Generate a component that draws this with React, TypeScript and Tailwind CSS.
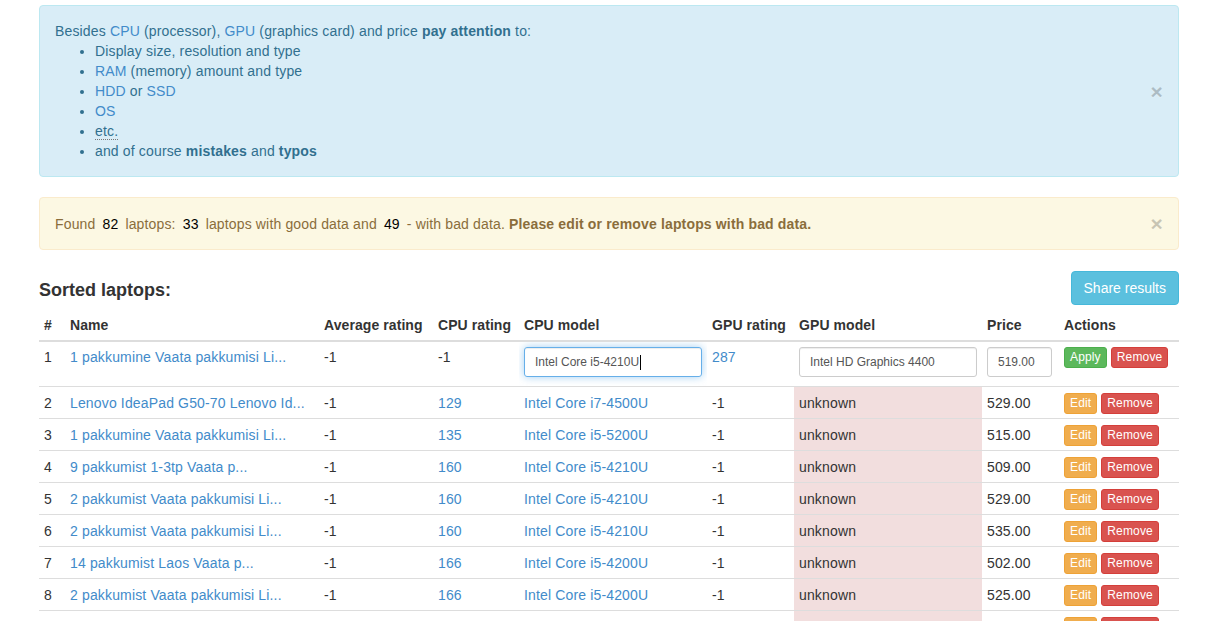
import React from 'react';

type Laptop = {
  id: number;
  name: string;
  avg: string;
  cpuRating: string;
  cpuModel: string;
  gpuRating: string;
  price: string;
};

const laptops: Laptop[] = [
  { id: 2, name: 'Lenovo IdeaPad G50-70 Lenovo Id...', avg: '-1', cpuRating: '129', cpuModel: 'Intel Core i7-4500U', gpuRating: '-1', price: '529.00' },
  { id: 3, name: '1 pakkumine Vaata pakkumisi Li...', avg: '-1', cpuRating: '135', cpuModel: 'Intel Core i5-5200U', gpuRating: '-1', price: '515.00' },
  { id: 4, name: '9 pakkumist 1-3tp Vaata p...', avg: '-1', cpuRating: '160', cpuModel: 'Intel Core i5-4210U', gpuRating: '-1', price: '509.00' },
  { id: 5, name: '2 pakkumist Vaata pakkumisi Li...', avg: '-1', cpuRating: '160', cpuModel: 'Intel Core i5-4210U', gpuRating: '-1', price: '529.00' },
  { id: 6, name: '2 pakkumist Vaata pakkumisi Li...', avg: '-1', cpuRating: '160', cpuModel: 'Intel Core i5-4210U', gpuRating: '-1', price: '535.00' },
  { id: 7, name: '14 pakkumist Laos Vaata p...', avg: '-1', cpuRating: '166', cpuModel: 'Intel Core i5-4200U', gpuRating: '-1', price: '502.00' },
  { id: 8, name: '2 pakkumist Vaata pakkumisi Li...', avg: '-1', cpuRating: '166', cpuModel: 'Intel Core i5-4200U', gpuRating: '-1', price: '525.00' },
  { id: 9, name: '3 pakkumist Vaata pakkumisi Li...', avg: '-1', cpuRating: '166', cpuModel: 'Intel Core i5-4200U', gpuRating: '-1', price: '539.00' },
];

const CloseX: React.FC = () => (
  <button className="text-[21px] font-bold leading-none text-black opacity-20 [text-shadow:0_1px_0_#fff]">×</button>
);

const Btn: React.FC<{ kind: 'apply' | 'edit' | 'remove'; children: React.ReactNode }> = ({ kind, children }) => {
  const colors =
    kind === 'apply'
      ? 'bg-[#5cb85c] border-[#4cae4c]'
      : kind === 'edit'
      ? 'bg-[#f0ad4e] border-[#eea236]'
      : 'bg-[#d9534f] border-[#d43f3a]';
  return (
    <button className={`h-[21px] px-[5px] rounded-[3px] border text-[12px] leading-[17px] text-white ${colors}`}>
      {children}
    </button>
  );
};

const link = 'text-[#428bca]';
const td = 'px-[5px] pt-[6px] pb-[4px] align-top border-t border-[#ddd] whitespace-nowrap overflow-hidden';
const td1 = 'px-[5px] pt-[5px] pb-[9px] align-top border-t border-[#ddd] whitespace-nowrap overflow-hidden';

export default function App() {
  return (
    <div className="h-[621px] overflow-hidden bg-white font-['Liberation_Sans',Arial,sans-serif] text-[14px] leading-[20px] tracking-[0.15px] text-[#333]">
      <div className="w-[1140px] ml-[39px] pt-[5px]">
        {/* info alert */}
        <div className="flex items-center rounded-[4px] border border-[#bce8f1] bg-[#d9edf7] text-[#31708f] p-[15px] mb-[20px]">
          <div className="flex-1">
            <div>
              Besides <a className={link}>CPU</a> (processor), <a className={link}>GPU</a> (graphics card) and price{' '}
              <b>pay attention</b> to:
            </div>
            <ul className="list-disc pl-[40px] m-0">
              <li>Display size, resolution and type</li>
              <li>
                <a className={link}>RAM</a> (memory) amount and type
              </li>
              <li>
                <a className={link}>HDD</a> or <a className={link}>SSD</a>
              </li>
              <li>
                <a className={link}>OS</a>
              </li>
              <li>
                <abbr className="no-underline border-b border-dotted border-[#777]">etc.</abbr>
              </li>
              <li>
                and of course <b>mistakes</b> and <b>typos</b>
              </li>
            </ul>
          </div>
          <CloseX />
        </div>

        {/* warning alert */}
        <div className="flex items-center rounded-[4px] border border-[#faebcc] bg-[#fcf8e3] text-[#8a6d3b] p-[15px] mb-[20px]">
          <div className="flex-1">
            Found <span className="px-[3px] text-black">82</span> laptops: <span className="px-[3px] text-black">33</span>{' '}
            laptops with good data and <span className="px-[3px] text-black">49</span> - with bad data.{' '}
            <b>Please edit or remove laptops with bad data.</b>
          </div>
          <CloseX />
        </div>

        {/* heading */}
        <div className="flex justify-between items-start h-[40px]">
          <h4 className="mt-[10px] text-[18px] leading-[20px] font-bold tracking-normal">Sorted laptops:</h4>
          <button className="mt-[1px] h-[34px] px-[12px] rounded-[4px] border border-[#46b8da] bg-[#5bc0de] text-white text-[14px] tracking-normal">
            Share results
          </button>
        </div>

        <table className="w-full table-fixed border-collapse">
          <colgroup>
            <col className="w-[26px]" />
            <col className="w-[254px]" />
            <col className="w-[114px]" />
            <col className="w-[86px]" />
            <col className="w-[188px]" />
            <col className="w-[87px]" />
            <col className="w-[188px]" />
            <col className="w-[77px]" />
            <col className="w-[120px]" />
          </colgroup>
          <thead>
            <tr className="text-left">
              {['#', 'Name', 'Average rating', 'CPU rating', 'CPU model', 'GPU rating', 'GPU model', 'Price', 'Actions'].map((h) => (
                <th key={h} className="px-[5px] py-[5px] align-bottom font-bold tracking-[0.08px] border-b-2 border-[#ddd] whitespace-nowrap">
                  {h}
                </th>
              ))}
            </tr>
          </thead>
          <tbody>
            <tr>
              <td className={td1}>1</td>
              <td className={td1}>
                <a className={link}>1 pakkumine Vaata pakkumisi Li...</a>
              </td>
              <td className={td1}>-1</td>
              <td className={td1}>-1</td>
              <td className={td1}>
                <div className="flex items-center h-[30px] rounded-[3px] border border-[#66afe9] px-[10px] text-[12px] text-[#555] tracking-normal shadow-[inset_0_1px_1px_rgba(0,0,0,0.075),0_0_8px_rgba(102,175,233,0.6)]">
                  Intel Core i5-4210U
                  <span className="ml-px inline-block w-px h-[15px] bg-black" />
                </div>
              </td>
              <td className={td1}>
                <a className={link}>287</a>
              </td>
              <td className={td1}>
                <input
                  readOnly
                  value="Intel HD Graphics 4400"
                  className="block w-full h-[30px] rounded-[3px] border border-[#ccc] px-[10px] text-[12px] text-[#555] tracking-normal shadow-[inset_0_1px_1px_rgba(0,0,0,0.075)] outline-none"
                />
              </td>
              <td className={td1}>
                <input
                  readOnly
                  value="519.00"
                  className="block w-[65px] h-[30px] rounded-[3px] border border-[#ccc] px-[10px] text-[12px] text-[#555] tracking-normal shadow-[inset_0_1px_1px_rgba(0,0,0,0.075)] outline-none"
                />
              </td>
              <td className={td1}>
                <div className="flex gap-[4px]">
                  <Btn kind="apply">Apply</Btn>
                  <Btn kind="remove">Remove</Btn>
                </div>
              </td>
            </tr>
            {laptops.map((l) => (
              <tr key={l.id}>
                <td className={td}>{l.id}</td>
                <td className={td}>
                  <a className={link}>{l.name}</a>
                </td>
                <td className={td}>{l.avg}</td>
                <td className={td}>
                  <a className={link}>{l.cpuRating}</a>
                </td>
                <td className={td}>
                  <a className={link}>{l.cpuModel}</a>
                </td>
                <td className={td}>{l.gpuRating}</td>
                <td className={`${td} bg-[#f2dede]`}>unknown</td>
                <td className={td}>{l.price}</td>
                <td className={td}>
                  <div className="flex gap-[4px]">
                    <Btn kind="edit">Edit</Btn>
                    <Btn kind="remove">Remove</Btn>
                  </div>
                </td>
              </tr>
            ))}
          </tbody>
        </table>
      </div>
    </div>
  );
}
